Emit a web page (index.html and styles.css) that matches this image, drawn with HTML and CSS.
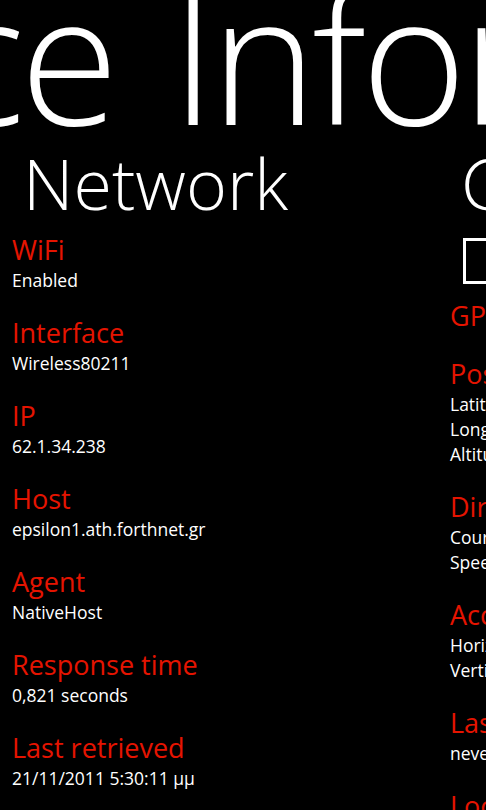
FILE: index.html
```html
<!DOCTYPE html>
<html lang="en">
<head>
<meta charset="utf-8">
<title>Device Information</title>
<link rel="stylesheet" href="styles.css">
</head>
<body>
<div class="pano">
  <div class="pano-title">Device Information</div>
  <div class="pano-items">
    <section class="item">
      <h2 class="item-header">Network</h2>
      <dl class="group"><dt class="label">WiFi</dt><dd class="value">Enabled</dd></dl>
      <dl class="group"><dt class="label">Interface</dt><dd class="value">Wireless80211</dd></dl>
      <dl class="group"><dt class="label">IP</dt><dd class="value">62.1.34.238</dd></dl>
      <dl class="group"><dt class="label">Host</dt><dd class="value">epsilon1.ath.forthnet.gr</dd></dl>
      <dl class="group"><dt class="label">Agent</dt><dd class="value">NativeHost</dd></dl>
      <dl class="group"><dt class="label">Response time</dt><dd class="value">0,821 seconds</dd></dl>
      <dl class="group"><dt class="label">Last retrieved</dt><dd class="value">21/11/2011 5:30:11 μμ</dd></dl>
    </section>
    <section class="item">
      <h2 class="item-header">Geolocation</h2>
      <div class="checkbox"></div>
      <dl class="group"><dt class="label">GPS status</dt></dl>
      <dl class="group"><dt class="label">Position</dt><dd class="value">Latitude</dd><dd class="value">Longitude</dd><dd class="value">Altitude</dd></dl>
      <dl class="group"><dt class="label">Direction</dt><dd class="value">Course</dd><dd class="value">Speed</dd></dl>
      <dl class="group"><dt class="label">Accuracy</dt><dd class="value">Horizontal</dd><dd class="value">Vertical</dd></dl>
      <dl class="group"><dt class="label">Last retrieved</dt><dd class="value">never</dd></dl>
      <dl class="group"><dt class="label">Location</dt></dl>
    </section>
  </div>
</div>
</body>
</html>
```
FILE: styles.css
```css
html, body {
  margin: 0;
  padding: 0;
  background: #000;
}
body {
  width: 486px;
  height: 810px;
  overflow: hidden;
  font-family: "Open Sans", "Noto Sans", sans-serif;
  color: #fff;
}
.pano {
  width: 486px;
  height: 810px;
  overflow: hidden;
}
.pano-title {
  font-size: 180px;
  font-weight: 300;
  line-height: 170px;
  letter-spacing: -5px;
  word-spacing: 15px;
  white-space: nowrap;
  margin: -29px 0 0 -390px;
}
.pano-items {
  display: flex;
}
.item {
  flex: 0 0 438px;
  box-sizing: border-box;
  padding-left: 12px;
}
.item-header {
  font-size: 70px;
  font-weight: 300;
  line-height: 80px;
  margin: 2px 0 9px 11px;
  white-space: nowrap;
}
.checkbox {
  width: 40px;
  height: 40px;
  border: 3px solid #fff;
  margin: 15px 0 14px 13px;
}
.group {
  margin: 0 0 22px 0;
}
.label {
  color: #e51400;
  font-size: 27px;
  line-height: 36px;
  white-space: nowrap;
}
.value {
  margin: 0;
  font-size: 17.5px;
  line-height: 25px;
  white-space: nowrap;
}
```
